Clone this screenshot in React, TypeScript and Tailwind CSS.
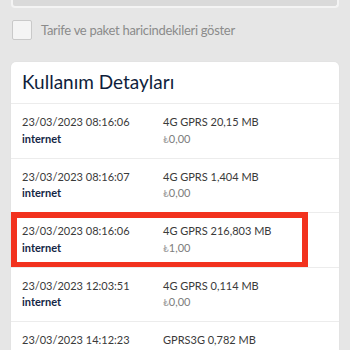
import React from 'react'

interface UsageRow {
  date: string
  type: string
  usage: string
  price: string
  highlight?: boolean
}

const rows: UsageRow[] = [
  { date: '23/03/2023 08:16:06', type: 'internet', usage: '4G GPRS 20,15 MB', price: '0,00' },
  { date: '23/03/2023 08:16:07', type: 'internet', usage: '4G GPRS 1,404 MB', price: '0,00' },
  { date: '23/03/2023 08:16:06', type: 'internet', usage: '4G GPRS 216,803 MB', price: '1,00', highlight: true },
  { date: '23/03/2023 12:03:51', type: 'internet', usage: '4G GPRS 0,114 MB', price: '0,00' },
  { date: '23/03/2023 14:12:23', type: 'internet', usage: 'GPRS3G 0,782 MB', price: '0,00' },
]

const App: React.FC = () => {
  return (
    <div className="w-[350px] h-[350px] overflow-hidden bg-[#e6e6e6] px-[11px] font-['Lato','Liberation_Sans',sans-serif]">
      {/* arama kutusunun alt kenarı */}
      <div className="h-[8px] rounded-b-[4px] border-x-2 border-b-2 border-[#f4f4f4] bg-[#dadada]" />

      <label className="mt-[12px] flex items-center leading-[20px]">
        <span className="ml-[1px] h-[20px] w-[20px] rounded-[2px] border border-[#c9c9c9] bg-[#f4f4f4]" />
        <span className="ml-[9px] text-[13px] tracking-[-0.3px] text-[#8b8b8b]">Tarife ve paket haricindekileri göster</span>
      </label>

      <div className="mt-[22px] rounded-[5px] bg-white shadow-[0_0_2px_rgba(0,0,0,0.06)]">
        <h3 className="flex h-[41px] items-center px-[11px] pb-[1px] text-[19px] text-[#0f1e3c]">Kullanım Detayları</h3>
        <ul>
          {rows.map((row, i) => (
            <li key={i} className="relative h-[54.5px] border-t border-[#ececec]">
              <div className="grid grid-cols-[141px_1fr] px-[11px] pt-[10px] text-[11px] leading-[16.5px]">
                <span className="text-[#3a3a3a]">{row.date}</span>
                <span className="text-[#3a3a3a]">{row.usage}</span>
                <span className="font-bold text-[#142645]">{row.type}</span>
                <span className="text-[#7d7d7d]">
                  <span className="text-[10px] text-[#a0a0a0]">₺</span>
                  {row.price}
                </span>
              </div>
              {row.highlight && (
                <div className="absolute left-0 top-[-1px] h-[56px] w-[297px] border-[6px] border-[#f2321e]" />
              )}
            </li>
          ))}
        </ul>
      </div>
    </div>
  )
}

export default App
